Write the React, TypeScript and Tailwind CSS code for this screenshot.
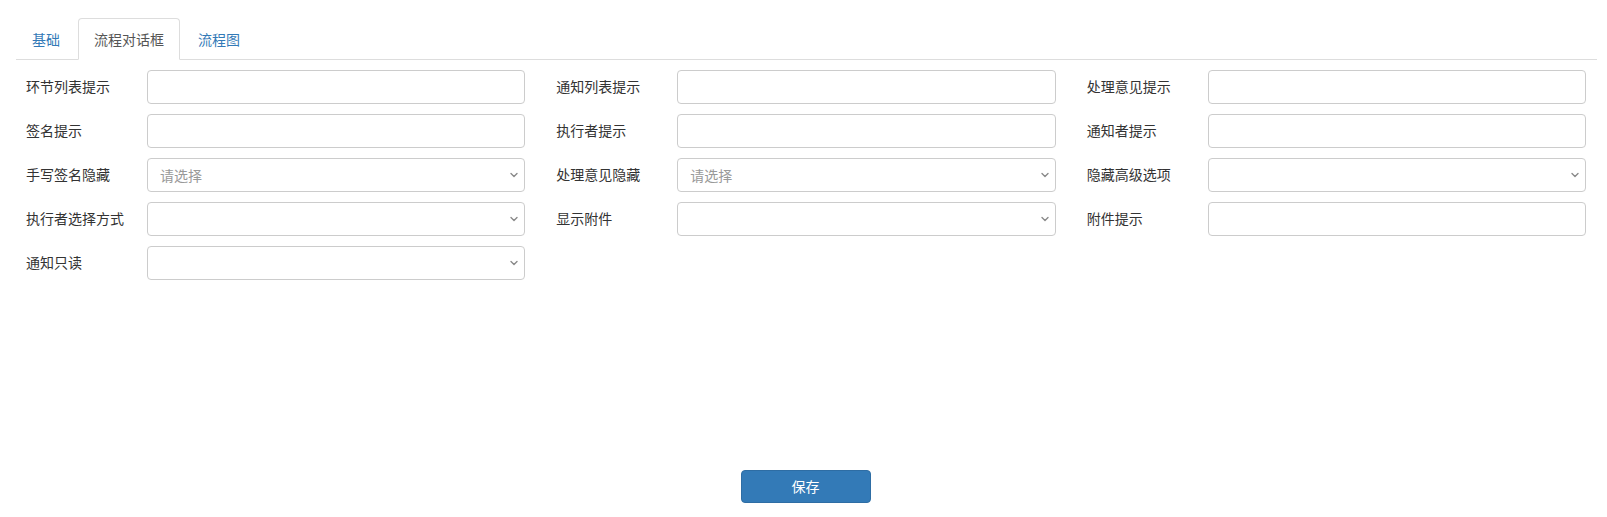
import { useState } from 'react'

type Field = {
  label: string
  kind: 'input' | 'select'
  placeholder?: string
}

const rows: (Field | null)[][] = [
  [
    { label: '环节列表提示', kind: 'input' },
    { label: '通知列表提示', kind: 'input' },
    { label: '处理意见提示', kind: 'input' },
  ],
  [
    { label: '签名提示', kind: 'input' },
    { label: '执行者提示', kind: 'input' },
    { label: '通知者提示', kind: 'input' },
  ],
  [
    { label: '手写签名隐藏', kind: 'select', placeholder: '请选择' },
    { label: '处理意见隐藏', kind: 'select', placeholder: '请选择' },
    { label: '隐藏高级选项', kind: 'select' },
  ],
  [
    { label: '执行者选择方式', kind: 'select' },
    { label: '显示附件', kind: 'select' },
    { label: '附件提示', kind: 'input' },
  ],
  [{ label: '通知只读', kind: 'select' }, null, null],
]

const tabs = ['基础', '流程对话框', '流程图']

function Chevron() {
  return (
    <svg className="w-[8px] h-[6px]" viewBox="0 0 8 6" fill="none">
      <path d="M1 1.5l3 3 3-3" stroke="#8a8a8a" strokeWidth={1.4} strokeLinecap="round" strokeLinejoin="round" />
    </svg>
  )
}

function FormField({ field }: { field: Field }) {
  return (
    <div className="flex items-center">
      <label className="w-[121px] shrink-0 text-[14px] text-[#333] leading-5 -mt-[2px]">{field.label}</label>
      {field.kind === 'input' ? (
        <input
          type="text"
          className="flex-1 min-w-0 h-[34px] px-3 border border-[#ccc] rounded-[4px] text-[14px] text-[#555] outline-none"
        />
      ) : (
        <div className="relative flex-1 min-w-0 h-[34px] border border-[#ccc] rounded-[4px] flex items-center pl-3 pr-6">
          <span className="text-[14px] text-[#999] leading-5">{field.placeholder ?? ''}</span>
          <span className="absolute right-[6px] top-1/2 -translate-y-1/2 flex">
            <Chevron />
          </span>
        </div>
      )}
    </div>
  )
}

export default function App() {
  const [active, setActive] = useState(1)

  return (
    <div
      className="w-[1607px] h-[517px] bg-white pt-[18px]"
      style={{ fontFamily: '"Noto Sans CJK SC", "Liberation Sans", sans-serif' }}
    >
      {/* tabs */}
      <div className="ml-[16px] mr-[10px] flex border-b border-[#ddd]">
        {tabs.map((t, i) => (
          <button
            key={t}
            onClick={() => setActive(i)}
            className={`-mb-px mr-[2px] h-[42px] px-[15px] text-[14px] leading-5 rounded-t-[4px] border ${
              i === active
                ? 'border-[#ddd] border-b-white bg-white text-[#555]'
                : 'border-transparent text-[#337ab7]'
            }`}
          >
            {t}
          </button>
        ))}
      </div>

      {/* form */}
      <div className="pl-[10px] pr-[6px] pt-[10px] flex flex-col gap-[10px]">
        {rows.map((row, ri) => (
          <div key={ri} className="grid grid-cols-3">
            {row.map((f, ci) => (
              <div key={ci} className="pl-[16px] pr-[15px]">
                {f && <FormField field={f} />}
              </div>
            ))}
          </div>
        ))}
      </div>

      <div className="pl-[10px] pr-[6px] mt-[190px] flex justify-center">
        <button className="w-[130px] h-[33px] rounded-[4px] bg-[#337ab7] border border-[#2e6da4] text-white text-[14px]">
          保存
        </button>
      </div>
    </div>
  )
}
